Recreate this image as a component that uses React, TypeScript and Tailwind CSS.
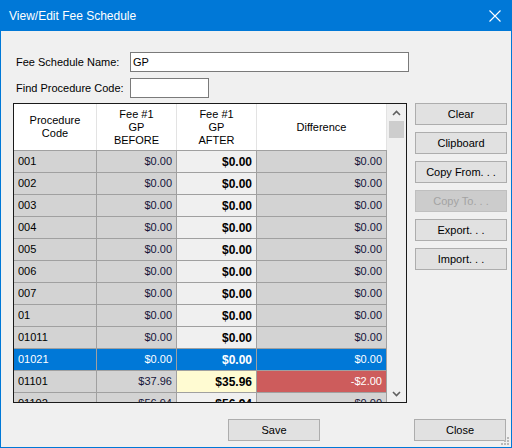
import React from "react";

type Row = {
  code: string;
  before: string;
  after: string;
  diff: string;
  kind?: "selected" | "changed";
};

const rows: Row[] = [
  { code: "001", before: "$0.00", after: "$0.00", diff: "$0.00" },
  { code: "002", before: "$0.00", after: "$0.00", diff: "$0.00" },
  { code: "003", before: "$0.00", after: "$0.00", diff: "$0.00" },
  { code: "004", before: "$0.00", after: "$0.00", diff: "$0.00" },
  { code: "005", before: "$0.00", after: "$0.00", diff: "$0.00" },
  { code: "006", before: "$0.00", after: "$0.00", diff: "$0.00" },
  { code: "007", before: "$0.00", after: "$0.00", diff: "$0.00" },
  { code: "01", before: "$0.00", after: "$0.00", diff: "$0.00" },
  { code: "01011", before: "$0.00", after: "$0.00", diff: "$0.00" },
  { code: "01021", before: "$0.00", after: "$0.00", diff: "$0.00", kind: "selected" },
  { code: "01101", before: "$37.96", after: "$35.96", diff: "-$2.00", kind: "changed" },
  { code: "01102", before: "$56.94", after: "$56.94", diff: "$0.00" },
];

const sideButtons = ["Clear", "Clipboard", "Copy From. . .", "Copy To. . .", "Export. . .", "Import. . ."];

function WinButton({ label, disabled, className = "" }: { label: string; disabled?: boolean; className?: string }) {
  return (
    <div
      className={`h-[22px] flex items-center justify-center border ${
        disabled ? "bg-[#cccccc] border-[#bfbfbf] text-[#a3a3a3]" : "bg-[#e1e1e1] border-[#adadad] text-black"
      } ${className}`}
    >
      {label}
    </div>
  );
}

function GridRow({ row }: { row: Row }) {
  const sel = row.kind === "selected";
  const changed = row.kind === "changed";
  const base = "h-[22px] shrink-0 flex items-center border-r border-b border-[#a0a0a0] px-[4px]";
  const gray = sel ? "bg-[#0078d7] text-white" : "bg-[#d3d3d3] text-[#15153a]";
  return (
    <div className="flex">
      <div className={`${base} ${gray} w-[83px] ${sel ? "" : "text-black"}`}>{row.code}</div>
      <div className={`${base} ${gray} w-[80px] justify-end`}>{row.before}</div>
      <div
        className={`${base} w-[80px] justify-end font-bold text-[12px] ${
          sel ? "bg-[#0078d7] text-white" : changed ? "bg-[#fffbd2] text-black" : "bg-[#f0f0f0] text-black"
        }`}
      >
        {row.after}
      </div>
      <div
        className={`${base} w-[130px] justify-end ${
          sel ? "bg-[#0078d7] text-white" : changed ? "bg-[#cd5c5c] text-white" : "bg-[#d3d3d3] text-[#15153a]"
        }`}
      >
        {row.diff}
      </div>
    </div>
  );
}

function Chevron({ up }: { up?: boolean }) {
  return (
    <svg width="9" height="6" viewBox="0 0 9 6" className="block">
      <path d={up ? "M1 5 L4.5 1.5 L8 5" : "M1 1 L4.5 4.5 L8 1"} fill="none" stroke="#606060" strokeWidth="1.6" />
    </svg>
  );
}

export default function App() {
  return (
    <div
      className="relative w-[512px] h-[448px] flex flex-col text-[11px] leading-none"
      style={{ fontFamily: '"Liberation Sans", Arial, sans-serif' }}
    >
      {/* Title bar */}
      <div className="h-[31px] shrink-0 bg-[#0078d7] flex items-center justify-between pl-[9px] pr-[11px] text-white text-[12px]">
        <span>View/Edit Fee Schedule</span>
        <svg width="12" height="12" viewBox="0 0 12 12">
          <path d="M0.5 0.5 L11.5 11.5 M11.5 0.5 L0.5 11.5" stroke="white" strokeWidth="1.1" />
        </svg>
      </div>

      {/* Body */}
      <div className="flex-1 bg-[#f0f0f0] border-x border-b border-[#0078d7] flex flex-col pl-[12px] pt-[21px]">
        <div className="flex items-center h-[20px]">
          <span className="w-[117px] pl-[3px]">Fee Schedule Name:</span>
          <div className="w-[279px] h-[20px] bg-white border border-[#7a7a7a] flex items-center px-[2px]">GP</div>
        </div>
        <div className="flex items-center h-[20px] mt-[6px]">
          <span className="w-[117px] pl-[3px]">Find Procedure Code:</span>
          <div className="w-[79px] h-[20px] bg-white border border-[#7a7a7a]" />
        </div>

        <div className="flex mt-[5px]">
          {/* Grid */}
          <div className="w-[394px] h-[300px] border border-[#1a1a1a] flex overflow-hidden">
            <div className="flex flex-col w-[373px] shrink-0">
              <div className="flex h-[47px] shrink-0 bg-white border-b border-[#a0a0a0] text-black leading-[13px] text-center">
                <div className="w-[83px] border-r border-[#e3e3e3] flex items-center justify-center">
                  Procedure
                  <br />
                  Code
                </div>
                <div className="w-[80px] border-r border-[#e3e3e3] flex items-center justify-center">
                  Fee #1
                  <br />
                  GP
                  <br />
                  BEFORE
                </div>
                <div className="w-[80px] border-r border-[#e3e3e3] flex items-center justify-center">
                  Fee #1
                  <br />
                  GP
                  <br />
                  AFTER
                </div>
                <div className="w-[130px] border-r border-[#e3e3e3] flex items-center justify-center">Difference</div>
              </div>
              {rows.map((r) => (
                <GridRow key={r.code} row={r} />
              ))}
            </div>
            {/* Scrollbar */}
            <div className="flex-1 bg-[#f0f0f0] flex flex-col items-center">
              <div className="h-[17px] w-full flex items-center justify-center">
                <Chevron up />
              </div>
              <div className="w-[15px] h-[17px] bg-[#cdcdcd]" />
              <div className="flex-1" />
              <div className="h-[17px] w-full flex items-center justify-center">
                <Chevron />
              </div>
            </div>
          </div>

          {/* Side buttons */}
          <div className="w-[92px] ml-[8px] flex flex-col gap-[7px]">
            {sideButtons.map((b) => (
              <WinButton key={b} label={b} disabled={b === "Copy To. . ."} />
            ))}
          </div>
        </div>

        <div className="flex mt-[16px]">
          <WinButton label="Save" className="w-[92px] ml-[215px] h-[21px]" />
          <WinButton label="Close" className="w-[92px] ml-[94px] h-[21px]" />
        </div>
      </div>

      {/* Resize grip */}
      <svg width="10" height="10" viewBox="0 0 10 10" className="absolute right-[2px] bottom-[2px]">
        <rect x="7" y="1" width="2" height="2" fill="#b8b8b8" />
        <rect x="4" y="4" width="2" height="2" fill="#b8b8b8" />
        <rect x="7" y="4" width="2" height="2" fill="#b8b8b8" />
        <rect x="1" y="7" width="2" height="2" fill="#b8b8b8" />
        <rect x="4" y="7" width="2" height="2" fill="#b8b8b8" />
        <rect x="7" y="7" width="2" height="2" fill="#b8b8b8" />
      </svg>
    </div>
  );
}
